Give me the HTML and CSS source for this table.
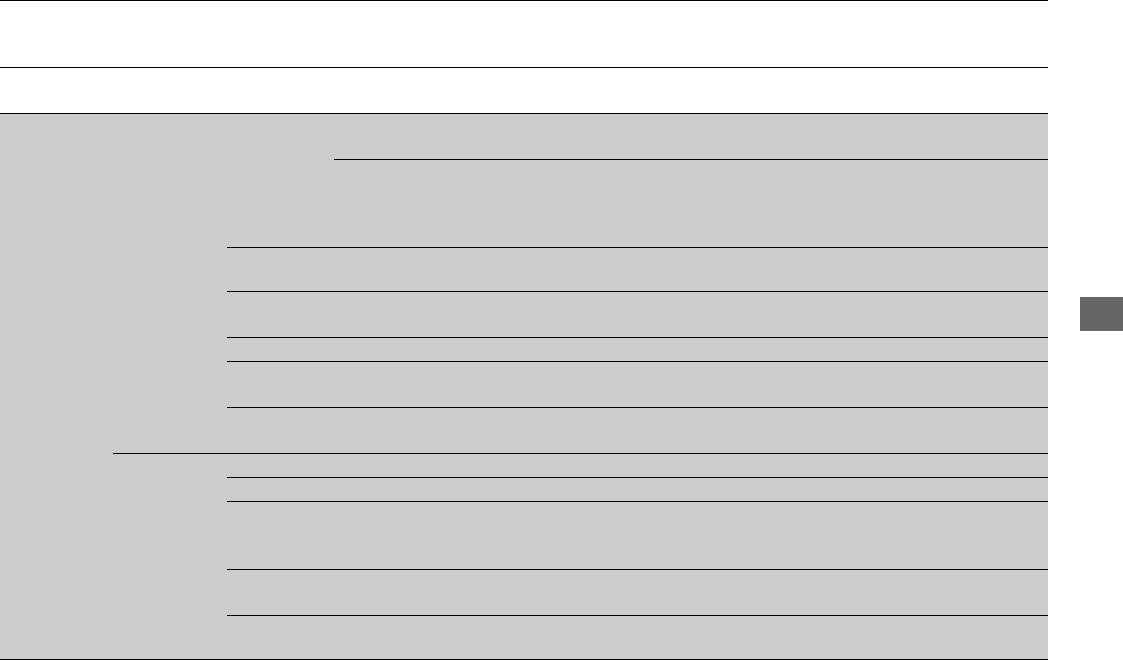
FILE: index.html
```html
<!DOCTYPE html>
<html lang="en">
<head>
<meta charset="utf-8">
<title>Table</title>
<link rel="stylesheet" href="styles.css">
</head>
<body>
<div class="page">
  <div class="sheet">
    <div class="cell head h1"></div>
    <div class="cell head h2"></div>

    <div class="cell body c1"></div>

    <div class="cell body c2a"></div>
    <div class="cell body c2b"></div>

    <div class="cell body c3top"></div>
    <div class="cell body c4top"></div>
    <div class="cell body c4second"></div>

    <div class="cell body wide r3"></div>
    <div class="cell body wide r4"></div>
    <div class="cell body wide r5"></div>
    <div class="cell body wide r6"></div>
    <div class="cell body wide r7"></div>
    <div class="cell body wide r8"></div>
    <div class="cell body wide r9"></div>
    <div class="cell body wide r10"></div>
    <div class="cell body wide r11"></div>
    <div class="cell body wide r12"></div>
  </div>
  <div class="side">
    <div class="tab"></div>
  </div>
</div>
</body>
</html>
```

FILE: styles.css
```css
html, body {
  margin: 0;
  padding: 0;
  background: #ffffff;
  font-family: "Liberation Sans", Arial, sans-serif;
}

.page {
  display: flex;
  align-items: flex-start;
  width: 1123px;
  height: 660px;
  overflow: hidden;
}

.sheet {
  display: grid;
  width: 1048px;
  grid-template-columns: 113px 114px 107px 714px;
  grid-template-rows: 67px 46px 46px 88px 44px 46px 24px 46px 46px 24px 24px 68px 46px 44px;
  border-bottom: 1px solid #000;
  flex: none;
}

.cell {
  box-sizing: border-box;
  border-top: 1px solid #000;
}

.head { background: #ffffff; grid-column: 1 / 5; }
.h1 { grid-row: 1; }
.h2 { grid-row: 2; }

.body { background: #cccccc; }

.c1 { grid-column: 1; grid-row: 3 / 15; }
.c2a { grid-column: 2; grid-row: 3 / 10; }
.c2b { grid-column: 2; grid-row: 10 / 15; }

.c3top { grid-column: 3; grid-row: 3 / 5; }
.c4top { grid-column: 4; grid-row: 3; }
.c4second { grid-column: 4; grid-row: 4; }

.wide { grid-column: 3 / 5; }
.r3 { grid-row: 5; }
.r4 { grid-row: 6; }
.r5 { grid-row: 7; }
.r6 { grid-row: 8; }
.r7 { grid-row: 9; }
.r8 { grid-row: 10; }
.r9 { grid-row: 11; }
.r10 { grid-row: 12; }
.r11 { grid-row: 13; }
.r12 { grid-row: 14; }

.side {
  margin-left: 32px;
  padding-top: 297px;
}

.tab {
  width: 43px;
  height: 34px;
  background: #666666;
}
```
